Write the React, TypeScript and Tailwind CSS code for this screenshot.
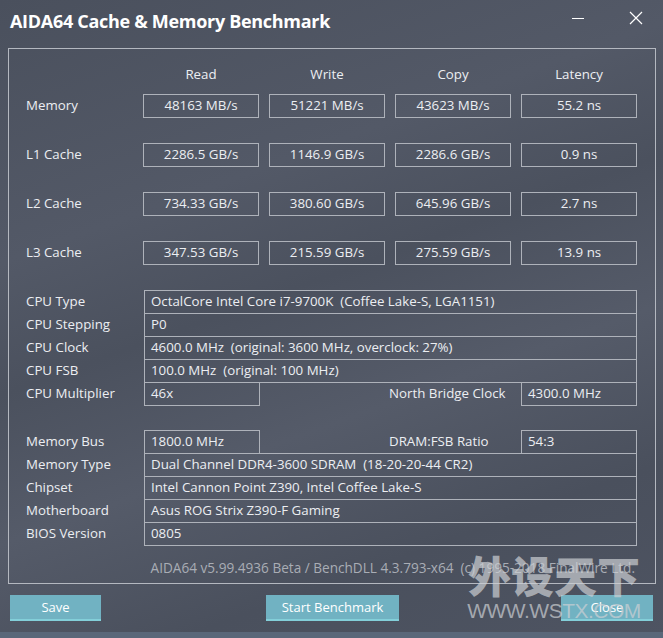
import React from 'react';

const rows = [
    { label: 'Memory', vals: ['48163 MB/s', '51221 MB/s', '43623 MB/s', '55.2 ns'] },
    { label: 'L1 Cache', vals: ['2286.5 GB/s', '1146.9 GB/s', '2286.6 GB/s', '0.9 ns'] },
    { label: 'L2 Cache', vals: ['734.33 GB/s', '380.60 GB/s', '645.96 GB/s', '2.7 ns'] },
    { label: 'L3 Cache', vals: ['347.53 GB/s', '215.59 GB/s', '275.59 GB/s', '13.9 ns'] },
];

const Box = ({ children, className = '' }: { children: React.ReactNode; className?: string }) => (
    <div className={`h-[24px] border border-[#aeb2ba] flex items-center whitespace-pre ${className}`}>{children}</div>
);

const InfoRow = ({ label, value, first }: { label: string; value: string; first?: boolean }) => (
    <div className={`flex items-center ${first ? '' : '-mt-px'}`}>
        <div className="w-[118px]">{label}</div>
        <Box className="w-[493px] px-[6px]">{value}</Box>
    </div>
);

const Btn = ({ children, className = '' }: { children: React.ReactNode; className?: string }) => (
    <button className={`h-[26px] pt-[2px] bg-[#71b2c2] border-b-2 border-[#83cfd9] text-white text-[13px] ${className}`}>
        {children}
    </button>
);

export default function App() {
    return (
        <div
            className="relative w-[663px] h-[638px] overflow-hidden text-[13.3px] text-[#eceef2] bg-[#4c5260] bg-[linear-gradient(160deg,#4a505d_0%,#535967_30%,#4b515e_45%,#555b69_62%,#4a505d_80%,#4e5462_100%)]"
            style={{ fontFamily: '"Open Sans", "Noto Sans", sans-serif' }}
        >
            {/* title bar */}
            <div className="h-[42px] flex items-center pl-[10px] pr-[20px]">
                <div className="text-[18px] font-bold text-white tracking-[-0.3px]">AIDA64 Cache &amp; Memory Benchmark</div>
                <div className="ml-auto flex items-center gap-[45px]">
                    <div className="w-[12px] h-px bg-white mt-[-6px]" />
                    <svg width="14" height="14" viewBox="0 0 14 14" className="mt-[-6px]">
                        <path d="M1 1 L13 13 M13 1 L1 13" stroke="white" strokeWidth="1.2" />
                    </svg>
                </div>
            </div>

            {/* main panel */}
            <div className="mt-[6px] mx-[8px] w-[648px] h-[536px] border border-[#b4b8c0] pl-[17px] pr-[18px] pt-[14px]">
                <div className="flex items-center h-[24px]">
                    <div className="w-[118px]" />
                    <div className="flex gap-[10px]">
                        {['Read', 'Write', 'Copy', 'Latency'].map((h) => (
                            <div key={h} className="w-[116px] text-center">{h}</div>
                        ))}
                    </div>
                </div>
                <div className="mt-[7px] flex flex-col gap-[25px]">
                    {rows.map((r) => (
                        <div key={r.label} className="flex items-center">
                            <div className="w-[118px]">{r.label}</div>
                            <div className="flex gap-[10px]">
                                {r.vals.map((v, i) => (
                                    <Box key={i} className="w-[116px] justify-center">{v}</Box>
                                ))}
                            </div>
                        </div>
                    ))}
                </div>

                <div className="mt-[25px] flex flex-col">
                    <InfoRow first label="CPU Type" value="OctalCore Intel Core i7-9700K  (Coffee Lake-S, LGA1151)" />
                    <InfoRow label="CPU Stepping" value="P0" />
                    <InfoRow label="CPU Clock" value="4600.0 MHz  (original: 3600 MHz, overclock: 27%)" />
                    <InfoRow label="CPU FSB" value="100.0 MHz  (original: 100 MHz)" />
                    <div className="flex items-center -mt-px">
                        <div className="w-[118px]">CPU Multiplier</div>
                        <Box className="w-[116px] px-[6px]">46x</Box>
                        <div className="w-[261px] pl-[129px]">North Bridge Clock</div>
                        <Box className="w-[116px] px-[6px]">4300.0 MHz</Box>
                    </div>
                </div>

                <div className="mt-[24px] flex flex-col">
                    <div className="flex items-center">
                        <div className="w-[118px]">Memory Bus</div>
                        <Box className="w-[116px] px-[6px]">1800.0 MHz</Box>
                        <div className="w-[261px] pl-[129px]">DRAM:FSB Ratio</div>
                        <Box className="w-[116px] px-[6px]">54:3</Box>
                    </div>
                    <InfoRow label="Memory Type" value="Dual Channel DDR4-3600 SDRAM  (18-20-20-44 CR2)" />
                    <InfoRow label="Chipset" value="Intel Cannon Point Z390, Intel Coffee Lake-S" />
                    <InfoRow label="Motherboard" value="Asus ROG Strix Z390-F Gaming" />
                    <InfoRow label="BIOS Version" value="0805" />
                </div>

                <div className="mt-[12px] text-right text-[13.6px] text-[#a9adb5] pr-[2px] whitespace-pre">
                    {'AIDA64 v5.99.4936 Beta / BenchDLL 4.3.793-x64  (c) 1995-2018 FinalWire Ltd.'}
                </div>
            </div>

            {/* buttons */}
            <div className="mt-[11px] px-[10px] flex items-start">
                <Btn className="w-[91px]">Save</Btn>
                <Btn className="ml-[165px] w-[133px]">Start Benchmark</Btn>
                <Btn className="ml-auto w-[92px]">Close</Btn>
            </div>

            <div className="absolute left-0 right-0 bottom-0 h-[6px] bg-[#5a6779]" />

            {/* watermark */}
            <div className="absolute left-[468px] top-[549px] w-[172px] flex flex-col items-center text-[#cdd0d4]/70 pointer-events-none">
                <div
                    className="text-[43px] font-black leading-[50px]"
                    style={{ fontFamily: '"Noto Sans CJK SC", sans-serif' }}
                >
                    外设天下
                </div>
                <div className="text-[21px] leading-[24px] tracking-[-0.5px]" style={{ fontFamily: '"Liberation Sans", sans-serif' }}>
                    WWW.WSTX.COM
                </div>
            </div>
        </div>
    );
}
